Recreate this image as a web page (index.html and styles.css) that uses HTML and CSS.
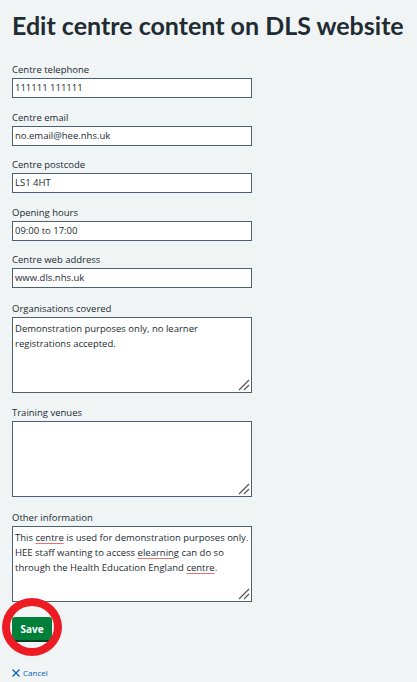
FILE: index.html
```html
<!DOCTYPE html>
<html lang="en">
<head>
<meta charset="utf-8">
<title>Edit centre content on DLS website</title>
<link rel="stylesheet" href="styles.css">
</head>
<body>
<main class="page">
  <h1 class="title">Edit centre content on DLS website</h1>
  <form class="form">
    <div class="field">
      <label class="label">Centre telephone</label>
      <div class="input">111111 111111</div>
    </div>
    <div class="field">
      <label class="label">Centre email</label>
      <div class="input">no.email@hee.nhs.uk</div>
    </div>
    <div class="field">
      <label class="label">Centre postcode</label>
      <div class="input">LS1 4HT</div>
    </div>
    <div class="field">
      <label class="label">Opening hours</label>
      <div class="input">09:00 to 17:00</div>
    </div>
    <div class="field">
      <label class="label">Centre web address</label>
      <div class="input">www.dls.nhs.uk</div>
    </div>
    <div class="field field-lg">
      <label class="label">Organisations covered</label>
      <div class="textarea">Demonstration purposes only, no learner registrations accepted.<svg class="grip" width="12" height="12" viewBox="0 0 12 12"><path d="M1 11 L11 1 M6 11 L11 6" stroke="#555" stroke-width="1.2" fill="none"/></svg></div>
    </div>
    <div class="field field-lg">
      <label class="label">Training venues</label>
      <div class="textarea"><svg class="grip" width="12" height="12" viewBox="0 0 12 12"><path d="M1 11 L11 1 M6 11 L11 6" stroke="#555" stroke-width="1.2" fill="none"/></svg></div>
    </div>
    <div class="field field-lg">
      <label class="label">Other information</label>
      <div class="textarea">This <span class="sp">centre</span> is used for demonstration purposes only. HEE staff wanting to access <span class="sp">elearning</span> can do so through the Health Education England <span class="sp">centre</span>.<svg class="grip" width="12" height="12" viewBox="0 0 12 12"><path d="M1 11 L11 1 M6 11 L11 6" stroke="#555" stroke-width="1.2" fill="none"/></svg></div>
    </div>
    <div class="actions">
      <button type="button" class="save">Save</button>
      <span class="ring"></span>
    </div>
    <a class="cancel" href="#"><svg width="8" height="8" viewBox="0 0 8 8"><path d="M0.5 0.5 L7.5 7.5 M7.5 0.5 L0.5 7.5" stroke="#005eb8" stroke-width="1.2"/></svg>Cancel</a>
  </form>
</main>
</body>
</html>
```
FILE: styles.css
```css
html, body {
  margin: 0;
  padding: 0;
  background: #f0f4f5;
}
body {
  font-family: "Open Sans", "Noto Sans", sans-serif;
  color: #212b32;
}
.page {
  padding: 8px 12px 0 12px;
}
.title {
  margin: 0;
  font-family: Lato, "Open Sans", sans-serif;
  font-size: 25px;
  font-weight: 700;
  line-height: 34px;
  white-space: nowrap;
}
.form {
  margin-top: 21px;
  display: flex;
  flex-direction: column;
  gap: 12.5px;
}
.field {
  display: flex;
  flex-direction: column;
  gap: 2px;
}
.field-lg {
  margin-top: 1px;
}
.label {
  font-size: 9.5px;
  line-height: 13px;
}
.input {
  height: 18px;
  border: 1px solid #4c6272;
  background: #fff;
  font-size: 9.5px;
  line-height: 18px;
  padding: 0 0 0 2px;
  width: 236px;
}
.textarea {
  position: relative;
  width: 236px;
  height: 69px;
  border: 1px solid #4c6272;
  background: #fff;
  font-size: 9.5px;
  line-height: 15px;
  padding: 3px 0 2px 2px;
}
.grip {
  position: absolute;
  right: 1px;
  bottom: 1px;
}
.sp {
  text-decoration: underline solid #e8726f;
  text-decoration-thickness: 1px;
  text-underline-offset: 2px;
}
.actions {
  position: relative;
  margin-top: 3px;
  width: 40px;
  height: 25px;
}
.save {
  display: block;
  width: 40px;
  height: 23px;
  border: 0;
  border-radius: 3px;
  background: #007f3b;
  color: #fff;
  font-family: "Open Sans", "Noto Sans", sans-serif;
  font-weight: 700;
  font-size: 10px;
  padding: 0;
  box-shadow: 0 2px 0 #00401e;
}
.ring {
  position: absolute;
  left: -10px;
  top: -19px;
  width: 44px;
  height: 42px;
  border: 8px solid #ed1c24;
  border-radius: 50%;
}
.cancel {
  margin-top: 13px;
  display: flex;
  align-items: center;
  gap: 3px;
  color: #005eb8;
  text-decoration: none;
  font-size: 8px;
  line-height: 10px;
}
```
